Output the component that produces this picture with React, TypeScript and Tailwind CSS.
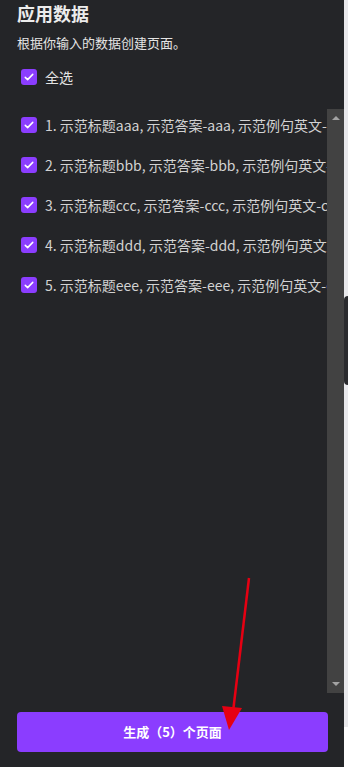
import { FC } from "react";

const items = ["aaa", "bbb", "ccc", "ddd", "eee"];

const Check: FC = () => (
    <span className="flex h-4 w-4 shrink-0 items-center justify-center rounded-[3px] bg-[#8b3dff]">
        <svg viewBox="0 0 16 16" className="h-3 w-3" fill="none" stroke="white" strokeWidth={2} strokeLinecap="round" strokeLinejoin="round">
            <path d="M3 8.5l3.2 3L13 4.5" />
        </svg>
    </span>
);

const App: FC = () => {
    return (
        <div className="relative flex h-[767px] w-[348px] overflow-hidden bg-white font-['Noto_Sans_CJK_SC','Noto_Sans',sans-serif]">
            {/* main panel */}
            <div className="flex w-[344px] shrink-0 flex-col bg-[#242528]">
                <div className="px-[17px] pt-[1px]">
                    <div className="text-[18px] font-bold leading-[24px] text-[#ececec]">应用数据</div>
                    <div className="mt-[8px] text-[13px] leading-[20px] text-[#e4e4e4]">根据你输入的数据创建页面。</div>
                    <div className="mt-[16px] flex h-4 items-center gap-[8px] pl-[4px]">
                        <Check />
                        <span className="text-[14px] text-[#e4e4e4]">全选</span>
                    </div>
                </div>

                {/* list with scrollbar */}
                <div className="mt-[24px] flex h-[584px]">
                    <div className="flex flex-1 flex-col gap-5 overflow-hidden pl-[21px] pt-[6px]">
                        {items.map((s, i) => (
                            <div key={s} className="flex h-5 items-center gap-[8px] whitespace-nowrap">
                                <Check />
                                <span className="text-[14px] text-[#d2d2d2]">
                                    {i + 1}. 示范标题{s}, 示范答案-{s}, 示范例句英文-{s}, 示范例句中文-{s}
                                </span>
                            </div>
                        ))}
                    </div>
                    <div className="flex w-[17px] shrink-0 flex-col items-center justify-between bg-[#424242] py-[7px]">
                        <span className="h-0 w-0 border-x-[4px] border-b-[4px] border-x-transparent border-b-[#a3a3a3]" />
                        <span className="h-0 w-0 border-x-[4px] border-t-[4px] border-x-transparent border-t-[#a3a3a3]" />
                    </div>
                </div>

                <div className="mt-[19px] px-[17px] pr-[16px]">
                    <button type="button" className="flex h-[40px] w-full items-center justify-center rounded-[4px] bg-[#8b3dff] text-[13px] font-bold text-white">
                        生成（5）个页面
                    </button>
                </div>
            </div>

            {/* right strip */}
            <div className="relative flex-1">
                <div className="h-[727px] bg-[#e9e9ec]" />
                <div className="absolute right-0 top-[296px] h-[89px] w-[4px] rounded-l-[4px] bg-[#2a2b2e]" />
            </div>

            {/* red annotation arrow */}
            <svg className="pointer-events-none absolute left-0 top-0" width="348" height="767">
                <line x1="249" y1="578" x2="233" y2="712" stroke="#e60012" strokeWidth={2.5} />
                <polygon points="222,706 242,708 229,730" fill="#e60012" />
            </svg>
        </div>
    );
};

export default App;
